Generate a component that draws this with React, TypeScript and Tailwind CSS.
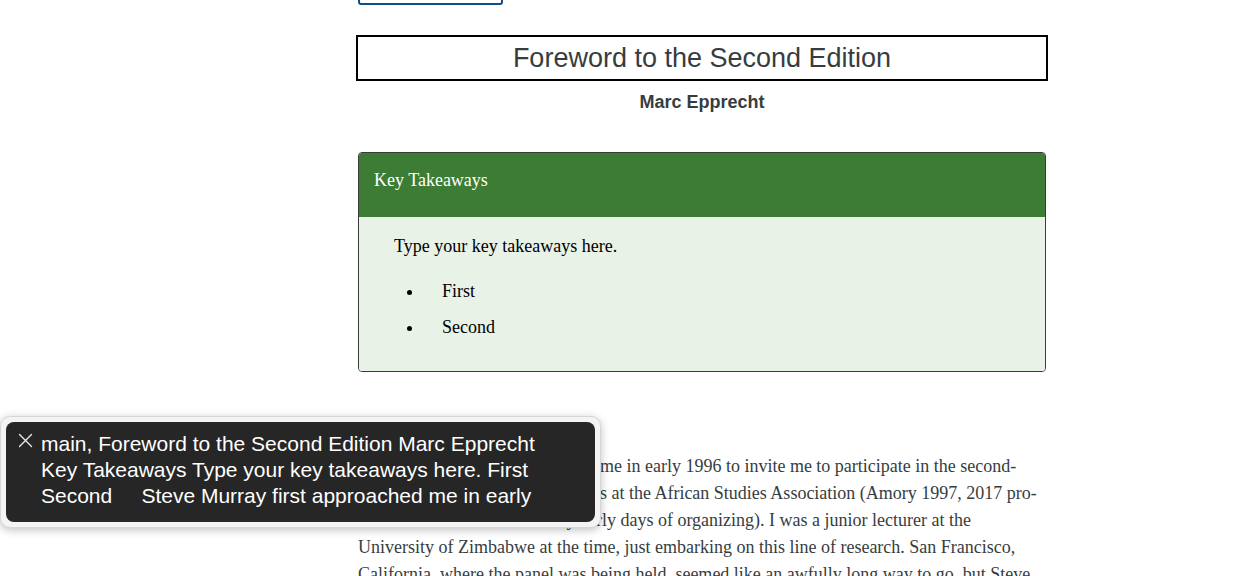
import React from "react";

const SERIF = "font-['Liberation_Serif','Times_New_Roman',serif]";
const SANS = "font-['Liberation_Sans',Arial,sans-serif]";

const PARAGRAPH = [
  "Steve Murray first approached me in early 1996 to invite me to participate in the second-",
  "ever panel on same-sex sexualities at the African Studies Association (Amory 1997, 2017 pro-",
  "vides an account of these very early days of organizing). I was a junior lecturer at the",
  "University of Zimbabwe at the time, just embarking on this line of research. San Francisco,",
  "California, where the panel was being held, seemed like an awfully long way to go, but Steve",
];

function KeyTakeaways() {
  return (
    <div className="mt-[39px] rounded-[4px] border border-[#3a3a3a] overflow-hidden">
      <div className={`bg-[#3c7c35] pl-[15px] pt-[14px] pb-[23px] text-[18px] leading-[27px] text-white ${SERIF}`}>
        Key Takeaways
      </div>
      <div className={`bg-[#e8f2e7] pl-[35px] pt-[16px] pb-[30px] text-[18px] leading-[27px] text-black ${SERIF}`}>
        <p>Type your key takeaways here.</p>
        <ul className="list-disc pl-[30px] mt-[18px] space-y-[9px]">
          <li className="pl-[18px]">First</li>
          <li className="pl-[18px]">Second</li>
        </ul>
      </div>
    </div>
  );
}

function SpeechOverlay() {
  return (
    <div className="absolute left-0 top-[416px] w-[601px] rounded-[10px] border border-[#d6d6d6] bg-[#f4f4f4] p-[5px] shadow-[0_2px_8px_rgba(0,0,0,0.25)]">
      <div className="relative h-[100px] rounded-[8px] bg-[#262626] pl-[35px] pt-[9px]">
        <svg
          className="absolute left-[12px] top-[11px]"
          width="15"
          height="15"
          viewBox="0 0 15 15"
          fill="none"
          stroke="#e8e8e8"
          strokeWidth="1.4"
          strokeLinecap="round"
        >
          <path d="M1.5 1.5 L13.5 13.5 M13.5 1.5 L1.5 13.5" />
        </svg>
        <p className={`whitespace-pre text-[21px] leading-[26px] text-white ${SANS}`}>
          {"main, Foreword to the Second Edition Marc Epprecht\nKey Takeaways Type your key takeaways here. First\nSecond     Steve Murray first approached me in early"}
        </p>
      </div>
    </div>
  );
}

export default function App() {
  return (
    <div className="relative h-[576px] w-full overflow-hidden bg-white">
      <div className="ml-[358px] w-[688px]">
        {/* ── cut-off button at the top ── */}
        <div className="-mt-[35px] h-[40px] w-[145px] rounded-[3px] border-2 border-[#0d4f8b]" />

        {/* ── Title ── */}
        <div className="-mx-[2px] mt-[30px] flex h-[46px] items-center justify-center border-2 border-black">
          <h1 className={`text-[27px] leading-none text-[#373d3f] ${SANS}`}>
            Foreword to the Second Edition
          </h1>
        </div>
        <p className={`mt-[10px] text-center text-[18px] font-bold leading-[22px] text-[#373d3f] ${SANS}`}>
          Marc Epprecht
        </p>

        <KeyTakeaways />

        {/* ── Body text ── */}
        <div className={`mt-[81px] text-[18px] leading-[27px] text-[#373d3f] ${SERIF}`}>
          {PARAGRAPH.map((line, i) => (
            <div key={line} className={i === 0 ? "whitespace-nowrap pl-[18px]" : "whitespace-nowrap"}>
              {line}
            </div>
          ))}
        </div>
      </div>

      <SpeechOverlay />
    </div>
  );
}
